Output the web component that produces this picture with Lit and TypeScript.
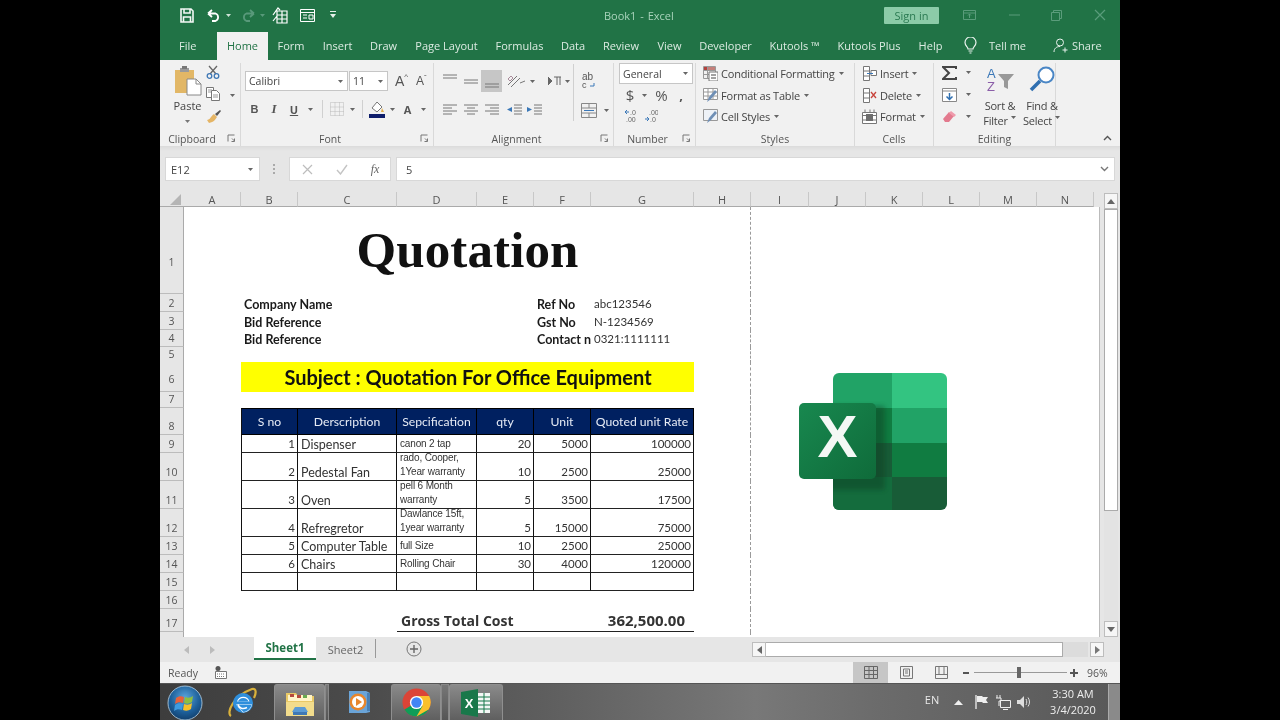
import { LitElement, html, css } from "lit";
import { customElement } from "lit/decorators.js";

const caret = (c = "#666") => html`<svg class="ic" width="7" height="5" viewBox="0 0 7 5"><path d="M1 1h5L3.5 4z" fill="${c}"/></svg>`;
const launcher = html`<svg class="launch" width="9" height="9" viewBox="0 0 9 9"><path d="M1 7.500V1h6.500M5 4.500l2.500 2.500M7.500 4.500v3h-3" fill="none" stroke="#777" stroke-width="1"/></svg>`;

const TABS: [string, number, string?][] = [
  ["File", 57], ["Home", 51, "on"], ["Form", 46], ["Insert", 47], ["Draw", 45], ["Page Layout", 81],
  ["Formulas", 65], ["Data", 42], ["Review", 54], ["View", 43], ["Developer", 69], ["Kutools ™", 69],
  ["Kutools Plus", 80], ["Help", 43],
];

const COLS = ["A", "B", "C", "D", "E", "F", "G", "H", "I", "J", "K", "L", "M", "N"];

const ITEMS: [string, string, string, string, string, string, number][] = [
  ["1", "Dispenser", "canon 2 tap", "20", "5000", "100000", 18],
  ["2", "Pedestal Fan", "rado, Cooper,\n1Year warranty", "10", "2500", "25000", 28],
  ["3", "Oven", "pell 6 Month\nwarranty", "5", "3500", "17500", 28],
  ["4", "Refregretor", "Dawlance 15ft,\n1year warranty", "5", "15000", "75000", 28],
  ["5", "Computer Table", "full Size", "10", "2500", "25000", 18],
  ["6", "Chairs", "Rolling Chair", "30", "4000", "120000", 18],
  ["", "", "", "", "", "", 18],
];

@customElement("app-root")
export class AppRoot extends LitElement {
  static styles = css`
    :host { display: block; width: 1280px; height: 720px; background: #000; overflow: hidden; font-family: "Open Sans", sans-serif; }
    * { box-sizing: border-box; }
    svg { display: block; }
    .window { width: 960px; height: 720px; margin-left: 160px; display: flex; flex-direction: column; background: #e6e6e6; position: relative; filter: blur(0.3px); }

    .title { height: 30px; background: #217346; display: grid; grid-template-columns: 444px 71px 209px 55px 24px 13px 33px 11px 31px 11px 32px 12px 14px; align-items: center; color: #a9d3bb; font-size: 11px; flex: none; }
    .qat { display: grid; grid-template-columns: 14px 13px 14px 14px 6px 14px 14px 3px 16px 12px 15px 15px 6px; align-items: center; justify-items: center; padding-left: 20px; }
    .doc { white-space: nowrap; word-spacing: 1px; }
    .signin { height: 17px; background: #8ccba8; color: #2b7a52; border-radius: 1px; display: flex; align-items: center; justify-content: center; font-size: 11px; }

    .tabs { height: 30px; background: #217346; display: flex; align-items: flex-end; color: #dcebe2; font-size: 11px; flex: none; }
    .tab { height: 28px; display: flex; align-items: center; justify-content: center; padding-bottom: 1px; white-space: nowrap; }
    .tab.tfirst { justify-content: flex-start; padding-left: 19px; }
    .tab.on { background: #f1f1f1; color: #217346; }
    .tabtools { display: flex; align-items: center; height: 28px; padding-bottom: 1px; }
    .tell { margin: 0 27px 0 12px; }
    .share { margin-left: 4px; }
    .bulb { margin-left: 12px; }

    .ribbon { height: 87px; background: #f1f1f1; display: flex; flex: none; font-size: 11px; color: #444; border-bottom: 1px solid #dcdcdc; }
    .group { display: flex; flex-direction: column; height: 83px; margin-top: 3px; border-right: 1px solid #d9d9d9; position: relative; flex: none; }
    .gbody { height: 68px; flex: none; }
    .glabel { height: 15px; text-align: center; line-height: 16px; font-size: 10.5px; color: #555; }
    .launch { position: absolute; right: 4px; bottom: 3px; }
    .ic { flex: none; }

    .g-clip { width: 81px; }
    .clip { display: grid; grid-template-columns: 39px 22px 10px; padding-left: 8px; padding-top: 2px; }
    .paste { display: flex; flex-direction: column; align-items: center; color: #444; line-height: 14px; font-size: 11px; }
    .paste span { margin-top: 3px; }
    .paste svg.ic:last-child { margin-top: 6px; }
    .clipcol { display: flex; flex-direction: column; gap: 8px; margin-left: -1px; }
    .clipcol svg { height: 14px; }
    .clipcar { padding-top: 28px; }

    .g-font { width: 193px; }
    .fonts { padding: 8px 0 0 4px; }
    .frow1 { display: grid; grid-template-columns: 103px 1px 39px 7px 14px 7px 14px; height: 20px; align-items: center; }
    .box { height: 20px; background: #fff; border: 1px solid #c6c6c6; display: flex; align-items: center; justify-content: space-between; padding: 0 3px; font-size: 10.5px; color: #444; }
    .frow2 { margin-top: 9px; height: 17px; display: grid; grid-template-columns: 19px 20px 20px 12px 12px 18px 12px 8px 21px 11px 19px 12px; align-items: center; justify-items: center; color: #555; font-size: 11px; font-weight: 700; }
    .bold-b { font-family: "Liberation Sans", sans-serif; }
    .it { font-style: italic; font-family: "Liberation Serif", serif; font-size: 13px; }
    .un { text-decoration: underline; }
    .vsep { width: 1px; height: 18px; background: #d0d0d0; }
    .bigA { font-family: "Liberation Sans", sans-serif; color: #555; font-size: 14px; display: flex; align-items: flex-start; }
    .bigA small { font-size: 8px; line-height: 8px; }
    .bigA.sm { font-size: 12px; }

    .g-align { width: 180px; }
    .align { display: flex; padding: 0 0 0 5px; }
    .aleft { width: 134px; padding-top: 7px; }
    .arow1 { display: grid; grid-template-columns: 21px 21px 21px 3px 21px 12px 9px 15px 11px; height: 22px; align-items: center; justify-items: center; }
    .arow2 { display: grid; grid-template-columns: 21px 21px 21px 24px 16px; margin-top: 11px; height: 14px; align-items: center; justify-items: center; }
    .hl { background: #c6c6c6; width: 21px; height: 22px; display: flex; align-items: center; justify-content: center; }
    .aright { border-left: 1px solid #d0d0d0; height: 57px; margin-top: 1px; padding: 8px 0 0 7px; }
    .mergerow { display: flex; gap: 6px; align-items: center; margin-top: 14px; }

    .g-num { width: 82px; }
    .num { padding: 0 0 0 5px; }
    .gen { width: 74px; height: 21px; font-size: 10.5px; }
    .nrow { display: grid; grid-template-columns: 22px 7px 6px 15px 8px 8px; align-items: center; justify-items: center; height: 22px; font-size: 15px; color: #555; }
    .comma { font-weight: 700; font-size: 13px; }
    .nrow2 { display: grid; grid-template-columns: 24px 16px; height: 20px; align-items: center; justify-items: center; }

    .g-styles { width: 159px; }
    .g-cells { width: 79px; }
    .list { padding: 0 0 0 7px; display: flex; flex-direction: column; }
    .li { height: 21.5px; display: flex; align-items: center; gap: 3px; white-space: nowrap; letter-spacing: -0.2px; }

    .g-edit { width: 122px; }
    .edit { display: grid; grid-template-columns: 23px 13px 5px 34px 8px 34px; padding: 3px 0 0 8px; }
    .ecol { display: flex; flex-direction: column; gap: 8px; }
    .ecar { display: flex; flex-direction: column; gap: 17px; padding-top: 4px; }
    .big { display: flex; flex-direction: column; align-items: center; line-height: 15px; white-space: nowrap; letter-spacing: -0.2px; }
    .big svg:first-child { margin: 0 0 6px; }
    .big span { display: flex; align-items: center; gap: 2px; }
    .collapse { flex: 1; display: flex; align-items: flex-end; justify-content: flex-end; padding: 0 8px 5px 0; }

    .fbar { height: 45px; padding: 10px 5px 0 5px; display: grid; grid-template-columns: 95px 29px 102px 5px 1fr; flex: none; background: linear-gradient(#dedede, #e6e6e6 4px); }
    .fbox { height: 24px; background: #fff; border: 1px solid #d8d8d8; display: flex; align-items: center; font-size: 11px; color: #444; padding: 0 5px; justify-content: space-between; }
    .fbox.formula { padding-left: 9px; }
    .dots { display: flex; flex-direction: column; gap: 2px; align-items: center; justify-content: center; height: 24px; padding-right: 2px; }
    .dots i { width: 2px; height: 2px; background: #aaa; }
    .fx { display: grid; grid-template-columns: 34px 35px 32px; align-items: center; justify-items: center; padding: 0; }
    .fxt { font-family: "Liberation Serif", serif; font-style: italic; color: #666; font-size: 12px; }

    .sheetwrap { display: flex; flex: none; height: 445px; }
    .sheetcol { width: 940px; flex: none; display: flex; flex-direction: column; position: relative; }
    .grid { display: grid; grid-template-columns: 24px 57px 57px 99px 80px 57px 57px 103px 57px 58px 57px 57px 57px 57px 57px; }
    .hdr { height: 15px; background: #e6e6e6; font-size: 11px; color: #555; }
    .hdr div { height: 15px; display: flex; align-items: center; justify-content: center; border-right: 1px solid #c8c8c8; border-bottom: 1px solid #aaa; }
    .hdr .corner { border-right: 0; justify-content: flex-end; padding-right: 3px; }
    .sheet { height: 430px; background: #fff; overflow: hidden; border-right: 1px solid #bbb; width: 940px; font-family: Lato, sans-serif; font-size: 12.5px; color: #333; }
    .row { width: 940px; }
    .rh { grid-column: 1; background: #e6e6e6; border-right: 1px solid #aaa; border-bottom: 1px solid #bcbcbc; font-family: "Open Sans", sans-serif; font-size: 10.5px; color: #555; display: flex; align-items: flex-end; justify-content: center; padding-bottom: 1px; }
    .rh1 { padding-bottom: 24px; }
    .rh6 { padding-bottom: 5px; }
    .c { display: flex; align-items: flex-end; white-space: nowrap; overflow: hidden; padding: 0 2px 0 3px; min-width: 0; }
    .cB { grid-column: 3; } .cC { grid-column: 4; } .cD { grid-column: 5; } .cE { grid-column: 6; } .cF { grid-column: 7; } .cG { grid-column: 8; }
    .cBC { grid-column: 3 / 5; }
    .pb { grid-column: 9; border-right: 1px dashed #9a9a9a; }
    .merged { grid-column: 3 / 9; justify-content: center; }
    .bold { font-weight: 700; color: #1a1a1a; }
    .n { font-size: 11.5px; line-height: 16px; }
    .quot { font-family: "Liberation Serif", serif; font-weight: 700; font-size: 51px; color: #111; align-items: center; padding: 0 0 2px 0; overflow: visible; letter-spacing: 0.1px; }
    .subj { background: #ff0; font-size: 20px; font-weight: 700; color: #111; align-items: center; }
    .th { background: #002060; color: #e6ebf5; align-items: center; justify-content: center; border-right: 1px solid #000; border-top: 1px solid #000; border-bottom: 1px solid #000; padding: 0; font-size: 12.2px; }
    .td { border-right: 1px solid #111; border-bottom: 1px solid #222; }
    .lead { border-left: 1px solid #111; }
    .r { justify-content: flex-end; }
    .spec { font-family: "Liberation Sans", sans-serif; font-size: 10px; line-height: 14px; white-space: pre; padding-bottom: 1px; letter-spacing: -0.15px; }
    .gross { grid-column: 5 / 8; font-family: "Open Sans", sans-serif; font-weight: 700; font-size: 14px; border-bottom: 1px solid #222; padding-left: 4px; align-items: center; }
    .grossv { grid-column: 8; font-family: "Open Sans", sans-serif; font-weight: 700; font-size: 15px; border-bottom: 1px solid #222; justify-content: flex-end; padding-right: 9px; align-items: center; }
    .logo { position: absolute; left: 639px; top: 180px; }

    .vbar { width: 20px; padding: 1px 2px 0 4px; display: flex; flex-direction: column; }
    .sbtn { height: 16px; background: #f6f6f6; border: 1px solid #bdbdbd; display: flex; align-items: center; justify-content: center; flex: none; }
    .thumb { height: 302px; background: #fff; border: 1px solid #ababab; flex: none; }
    .track { flex: 1; background: #e3e3e3; }

    .tabbar { height: 25px; flex: none; display: grid; grid-template-columns: 94px 62px 59px 1px 1fr; align-items: start; background: #e6e6e6; font-size: 11px; color: #666; position: relative; }
    .navs { display: flex; gap: 21px; padding: 9px 0 0 24px; }
    .sh1 { height: 23px; background: #fff; border-bottom: 2px solid #217346; color: #217346; font-weight: 700; display: flex; align-items: center; justify-content: center; font-size: 11.5px; }
    .sh2 { height: 21px; display: flex; align-items: center; justify-content: center; padding-top: 3px; }
    .sep2 { height: 19px; margin-top: 2px; background: #999; }
    .plus { display: flex; justify-content: space-between; padding: 4px 0 0 30px; height: 25px; }
    .hscroll { display: flex; padding: 2px 18px 0 0; width: 368px; flex: none; margin-top: -1px; }
    .hbtn { width: 14px; height: 15px; background: #f6f6f6; border: 1px solid #bdbdbd; display: flex; align-items: center; justify-content: center; flex: none; }
    .hthumb { width: 297px; height: 15px; background: #fff; border: 1px solid #ababab; border-left: 0; flex: none; }
    .htrack { width: 25px; height: 15px; background: #dcdcdc; margin-right: 2px; flex: none; }

    .status { height: 21px; flex: none; background: #f1f1f1; display: flex; align-items: center; font-size: 10.5px; color: #555; padding-left: 8px; }
    .status .macro { margin-left: 17px; }
    .views { margin-left: auto; display: grid; grid-template-columns: 35px 36px 34px 16px 93px 14px; align-items: center; justify-items: center; height: 21px; }
    .vhl { background: #c6c6c6; width: 35px; height: 21px; display: flex; align-items: center; justify-content: center; }
    .slider { width: 93px; height: 1px; background: #999; position: relative; display: block; }
    .knob { position: absolute; left: 43px; top: -5px; width: 4px; height: 11px; background: #666; }
    .pct { font-size: 10.5px; width: 39px; padding-left: 6px; }

    .taskbar { height: 37px; flex: none; display: grid; grid-template-columns: 50px 64px 51px 4px 60px 2px 50px 8px 54px 1fr 28px 24px 22px 22px 20px 74px 12px; align-items: center; justify-items: center; background: linear-gradient(90deg, #3d3d3d 0%, #4a4a4a 20%, #5e5e5e 40%, #787878 62%, #6b6b6b 75%, #585858 100%); border-top: 1px solid #555; color: #e8e8e8; font-size: 11px; }
    .tb { width: 100%; height: 36px; display: flex; align-items: center; justify-content: center; background: linear-gradient(#8a8a8a, #5f5f5f); border: 1px solid #8f8f8f; border-bottom: 0; border-radius: 3px 3px 0 0; }
    .sliver { width: 100%; height: 36px; background: linear-gradient(#777, #555); border: 1px solid #888; border-bottom: 0; }
    .clock { text-align: center; line-height: 16px; font-size: 11px; white-space: nowrap; color: #eee; padding-left: 4px; }
    .desk { width: 100%; height: 36px; background: #8a8a8a; border-left: 1px solid #aaa; }
    .en { font-size: 11px; margin-bottom: 6px; }
  `;

  private logo() {
    return html`<svg class="logo" width="150" height="140" viewBox="0 0 150 140">
      <defs><linearGradient id="xg" x1="0" y1="0" x2="1" y2="1"><stop offset="0" stop-color="#18884f"/><stop offset="1" stop-color="#0f6b3a"/></linearGradient>
      <filter id="xb" x="-20%" y="-20%" width="140%" height="140%"><feGaussianBlur stdDeviation="2.5"/></filter>
      <clipPath id="xc"><rect x="34" y="1" width="114" height="137" rx="6"/></clipPath></defs>
      <g clip-path="url(#xc)">
        <rect x="34" y="1" width="59" height="35" fill="#21a366"/><rect x="93" y="1" width="55" height="35" fill="#33c481"/>
        <rect x="34" y="36" width="59" height="35" fill="#107c41"/><rect x="93" y="36" width="55" height="35" fill="#21a366"/>
        <rect x="34" y="71" width="59" height="34" fill="#185c37"/><rect x="93" y="71" width="55" height="34" fill="#107c41"/>
        <rect x="34" y="105" width="114" height="33" fill="#185c37"/>
        <rect x="34" y="105" width="59" height="33" fill="#14703f" opacity=".8"/>
        <rect x="20" y="34" width="66" height="84" rx="3" fill="#0b3d22" opacity=".45" filter="url(#xb)"/>
      </g>
      <rect x="0" y="31" width="77" height="76" rx="5" fill="url(#xg)"/>
      <text x="38.500" y="85" text-anchor="middle" font-family="Liberation Sans, sans-serif" font-weight="700" font-size="60" fill="#f4f8f5">X</text>
    </svg>`;
  }

  private titleBar() {
    return html`<div class="title">
      <div class="qat">
        <svg class="ic" width="14" height="15" viewBox="0 0 14 15"><path d="M1 1h10l2 2v11H1zM4 1v4h6V1M3.500 14V9h7v5" fill="none" stroke="#fff" stroke-width="1.600" opacity=".95"/></svg>
        <span></span>
        <svg class="ic" width="14" height="13" viewBox="0 0 14 13"><path d="M1 4.500h7.500a4 4 0 010 7.500H5M1 4.500L5 1M1 4.500L5 8" fill="none" stroke="#fff" stroke-width="1.800"/></svg>
        ${caret("#cfe3d7")}
        <span></span>
        <svg class="ic" width="14" height="13" viewBox="0 0 14 13"><path d="M13 4.500H5.500a4 4 0 000 7.500H9M13 4.500L9 1M13 4.500L9 8" fill="none" stroke="#58997a" stroke-width="1.800"/></svg>
        ${caret("#58997a")}
        <span></span>
        <svg class="ic" width="16" height="17" viewBox="0 0 16 17"><path d="M5 4h10v12H5zM5 8h10M5 12h10M10 4v12M1 8l5-7 2 2M1 14l4-5" fill="none" stroke="#fff" stroke-width="1.200"/></svg>
        <span></span>
        <svg class="ic" width="15" height="13" viewBox="0 0 15 13"><path d="M.5.500h14v12H.500zM.5 3.500h14M3 6h4M3 9h4M9 6h4v4H9z" fill="none" stroke="#fff" stroke-width="1"/></svg>
        <span></span>
        <svg class="ic" width="6" height="8" viewBox="0 0 6 8"><path d="M0 0h6v1H0zM0 3h6L3 7z" fill="#e6f0ea"/></svg>
      </div>
      <div class="doc">Book1 - Excel</div><span></span>
      <div class="signin">Sign in</div><span></span>
      <svg width="13" height="10" viewBox="0 0 13 10"><path d="M.5.500h12v9H.500zM.5 3h12M6.500 8V4M5 5.500l1.500-1.500L8 5.500" fill="none" stroke="#5a9c7b"/></svg><span></span>
      <svg width="11" height="2" viewBox="0 0 11 2"><path d="M0 1h11" stroke="#5a9c7b"/></svg><span></span>
      <svg width="11" height="11" viewBox="0 0 11 11"><path d="M.5 2.500h8v8h-8zM2.500 2.500v-2h8v8h-2" fill="none" stroke="#5a9c7b"/></svg><span></span>
      <svg width="12" height="12" viewBox="0 0 12 12"><path d="M1 1l10 10M11 1L1 11" stroke="#5a9c7b" stroke-width="1.200"/></svg>
    </div>`;
  }

  private tabs() {
    return html`<div class="tabs">
      ${TABS.map(([t, w, on], i) => html`<div class="tab ${on ?? ""} ${i === 0 ? "tfirst" : ""}" style="width:${w}px">${t}</div>`)}
      <div class="tabtools">
        <svg class="bulb ic" width="13" height="17" viewBox="0 0 13 17"><path d="M4 12c0-2-3-3-3-6.500a5.500 5.500 0 0111 0C12 9 9 10 9 12zM4.500 14h4M5.500 16h2" fill="none" stroke="#eaf3ee" stroke-width="1.200"/></svg>
        <span class="tell">Tell me</span>
        <svg class="ic" width="15" height="15" viewBox="0 0 15 15"><circle cx="7" cy="4.500" r="3.500" fill="none" stroke="#eaf3ee"/><path d="M1 14c0-3.500 2.500-5.500 6-5.500M9.500 12h5M12 9.500v5" fill="none" stroke="#eaf3ee"/></svg>
        <span class="share">Share</span>
      </div>
    </div>`;
  }

  private ribbon() {
    const lines = (d: string, w = 16, h = 12) => html`<svg class="ic" width="${w}" height="${h}" viewBox="0 0 ${w} ${h}"><path d="${d}" stroke="#777" stroke-width="1" fill="none"/></svg>`;
    return html`<div class="ribbon">
      <div class="group g-clip">
        <div class="gbody clip">
          <div class="paste">
            <svg class="ic" width="28" height="31" viewBox="0 0 28 31"><path d="M1 5h19v23H1z" fill="#e2b766"/><path d="M6 3h9v4H6z" fill="#9a9a9a"/><path d="M8 1h5v3H8z" fill="#777"/><path d="M13 14h9l5 5v11H13z" fill="#fff" stroke="#888"/><path d="M22 14v5h5" fill="none" stroke="#888"/></svg>
            <span>Paste</span>
            ${caret("#777")}
          </div>
          <div class="clipcol">
            <svg width="14" height="14" viewBox="0 0 14 14"><path d="M3 1l7 8M11 1L4 9" stroke="#666" stroke-width="1.300"/><circle cx="3.500" cy="11" r="2.300" fill="none" stroke="#3f78b5" stroke-width="1.300"/><circle cx="10.500" cy="11" r="2.300" fill="none" stroke="#3f78b5" stroke-width="1.300"/></svg>
            <svg width="15" height="14" viewBox="0 0 15 14"><path d="M.5.500h7v10h-7z" fill="#fff" stroke="#777"/><path d="M5.500 3.500h5l3 3v7h-8z" fill="#fff" stroke="#777"/><path d="M2 3h4M2 5h3M7 8h5M7 10h5" stroke="#999"/></svg>
            <svg width="15" height="14" viewBox="0 0 15 14"><path d="M9 5l5-4 1 1-4 5z" fill="#555"/><path d="M1 11c3 0 4-4 7-6l3 3c-2 3-3 5-8 6z" fill="#e5b565"/></svg>
          </div>
          <div class="clipcar">${caret("#666")}</div>
        </div>
        <div class="glabel" style="padding-right:16px">Clipboard</div>${launcher}
      </div>

      <div class="group g-font">
        <div class="gbody fonts">
          <div class="frow1">
            <div class="box"><span>Calibri</span>${caret()}</div><span></span>
            <div class="box"><span>11</span>${caret()}</div><span></span>
            <div class="bigA">A<small>^</small></div><span></span>
            <div class="bigA sm">A<small>ˇ</small></div>
          </div>
          <div class="frow2">
            <span class="bold-b">B</span><span class="it">I</span><span class="un">U</span>${caret()}
            <span class="vsep"></span>
            <svg class="ic" width="14" height="14" viewBox="0 0 14 14"><path d="M.5.500h13v13H.500zM.5 5h13M.5 9.500h13M5 .5v13M9.500.5v13" stroke="#bbb" stroke-dasharray="1 1" fill="none"/></svg>
            ${caret()}<span class="vsep"></span>
            <svg class="ic" width="16" height="17" viewBox="0 0 16 17"><path d="M3 7l5-6 5 5-5 5z" fill="#fff" stroke="#777"/><path d="M13 7l2 4h-3z" fill="#e3b04b"/><path d="M0 13h16v4H0z" fill="#0e1d6b"/></svg>
            ${caret()}<span>A</span>${caret()}
          </div>
        </div>
        <div class="glabel" style="padding-right:14px">Font</div>${launcher}
      </div>

      <div class="group g-align">
        <div class="gbody align">
          <div class="aleft">
            <div class="arow1">
              ${lines("M1 1h14M1 4h14", 16, 14)}
              ${lines("M1 6h14M1 9h14", 16, 14)}
              <div class="hl">${lines("M3 11h14M3 14h14", 20, 16)}</div>
              <span></span>
              <svg class="ic" width="20" height="14" viewBox="0 0 20 14"><path d="M2 11L11 2M5 13l9-9M14 9l5-2" stroke="#777" fill="none"/><path d="M2 5l3-3 2 2-3 3z" fill="none" stroke="#aa8b9b"/></svg>
              ${caret()}<span></span>
              <svg class="ic" width="14" height="10" viewBox="0 0 14 10"><path d="M0 1l4 4-4 4zM6 1h7M9 1v8M12 1v8" fill="#666" stroke="#666"/></svg>
              ${caret()}
            </div>
            <div class="arow2">
              ${lines("M1 1h14M1 4h9M1 7h14M1 10h9")}
              ${lines("M1 1h14M4 4h8M1 7h14M4 10h8")}
              ${lines("M1 1h14M6 4h9M1 7h14M6 10h9")}
              <svg class="ic" width="16" height="12" viewBox="0 0 16 12"><path d="M8 1h8M8 4h8M8 7h8M8 10h8" stroke="#777"/><path d="M6 3L1 5.500 6 8z" fill="#3b78b8"/></svg>
              <svg class="ic" width="16" height="12" viewBox="0 0 16 12"><path d="M8 1h8M8 4h8M8 7h8M8 10h8" stroke="#777"/><path d="M1 3l5 2.500L1 8z" fill="#3b78b8"/></svg>
            </div>
          </div>
          <div class="aright">
            <svg class="ic" width="15" height="17" viewBox="0 0 15 17"><text x="1" y="8" font-size="10" font-family="Liberation Sans, sans-serif" fill="#555">ab</text><text x="1" y="16" font-size="9" font-family="Liberation Sans, sans-serif" fill="#555">c</text><path d="M13 11v3H9" fill="none" stroke="#3b78b8"/></svg>
            <div class="mergerow">
              <svg class="ic" width="16" height="15" viewBox="0 0 16 15"><path d="M.5.500h15v14H.500zM.5 5h15M.5 10h15M8 .5V5M8 10v4.500" fill="none" stroke="#888"/><path d="M3 7.500h10" stroke="#3b78b8"/></svg>
              ${caret()}
            </div>
          </div>
        </div>
        <div class="glabel" style="padding-right:14px">Alignment</div>${launcher}
      </div>

      <div class="group g-num">
        <div class="gbody num">
          <div class="box gen"><span>General</span>${caret()}</div>
          <div class="nrow"><span>$</span>${caret()}<span></span><span>%</span><span></span><span class="comma">,</span></div>
          <div class="nrow2">
            <svg class="ic" width="14" height="14" viewBox="0 0 14 14"><text x="6" y="6" font-size="7" font-family="Liberation Sans, sans-serif" fill="#666">.0</text><text x="2" y="13" font-size="7" font-family="Liberation Sans, sans-serif" fill="#666">.00</text><path d="M5 3H1M3 1L1 3l2 2" stroke="#3b78b8" fill="none"/></svg>
            <svg class="ic" width="14" height="14" viewBox="0 0 14 14"><text x="5" y="6" font-size="7" font-family="Liberation Sans, sans-serif" fill="#666">.00</text><text x="6" y="13" font-size="7" font-family="Liberation Sans, sans-serif" fill="#666">.0</text><path d="M1 10h4M3 8l2 2-2 2" stroke="#3b78b8" fill="none"/></svg>
          </div>
        </div>
        <div class="glabel" style="padding-right:14px">Number</div>${launcher}
      </div>

      <div class="group g-styles">
        <div class="gbody list">
          <div class="li"><svg class="ic" width="15" height="15" viewBox="0 0 15 15"><path d="M.5.500h12v12H.500zM.5 4.500h12M.5 8.500h12M4.500.5v12" fill="none" stroke="#999"/><path d="M1 1h3v3H1z" fill="#b4413c"/><path d="M5 1h7v3H5z" fill="#c47f7a"/><path d="M6 6h9v9H6z" fill="#fff" stroke="#777"/><path d="M8 9h5M8 12h5" stroke="#444"/></svg><span>Conditional Formatting</span>${caret()}</div>
          <div class="li"><svg class="ic" width="15" height="15" viewBox="0 0 15 15"><path d="M.5.500h14v11H.500zM.5 4h14M.5 8h14M5 .5v11M10 .5v11" fill="#fff" stroke="#999"/><path d="M4 14l2-5 6-7 2 2-6 7z" fill="#6f8fb5"/></svg><span>Format as Table</span>${caret()}</div>
          <div class="li"><svg class="ic" width="15" height="15" viewBox="0 0 15 15"><path d="M.5.500h14v11H.500z" fill="#eef2f7" stroke="#999"/><path d="M4 14l2-5 6-7 2 2-6 7z" fill="#6f8fb5"/></svg><span>Cell Styles</span>${caret()}</div>
        </div>
        <div class="glabel">Styles</div>
      </div>

      <div class="group g-cells">
        <div class="gbody list">
          <div class="li"><svg class="ic" width="15" height="15" viewBox="0 0 15 15"><path d="M1.500.500h6v14h-6zM1.500 5h6M1.500 10h6M9 4.500h5.500v5H9z" fill="#fff" stroke="#777"/><path d="M5 7.500h6" stroke="#3b78b8"/></svg><span>Insert</span>${caret()}</div>
          <div class="li"><svg class="ic" width="15" height="15" viewBox="0 0 15 15"><path d="M1.500.500h6v14h-6zM1.500 5h6M1.500 10h6" fill="#fff" stroke="#777"/><path d="M9 4l5 6M14 4l-5 6" stroke="#c8433b" stroke-width="1.300"/></svg><span>Delete</span>${caret()}</div>
          <div class="li"><svg class="ic" width="15" height="15" viewBox="0 0 15 15"><path d="M.5 3.500h14v11H.500zM.5 6.500h14M.5 11h14" fill="#fff" stroke="#777"/><path d="M4 5h7v7H4z" fill="#6d6d6d"/><path d="M3 .5v3M8 .5v3M12 .5v3" stroke="#777"/></svg><span>Format</span>${caret()}</div>
        </div>
        <div class="glabel">Cells</div>
      </div>

      <div class="group g-edit">
        <div class="gbody edit">
          <div class="ecol">
            <svg width="15" height="14" viewBox="0 0 15 14"><path d="M14 3V1H1l6 6-6 6h13v-2" fill="none" stroke="#444" stroke-width="2"/></svg>
            <svg width="15" height="14" viewBox="0 0 15 14"><path d="M.5.500h14v13H.500z" fill="#fff" stroke="#888"/><path d="M.5 3h14" stroke="#888"/><path d="M7.500 5v6M4.500 8.500l3 3 3-3" fill="none" stroke="#2f6fb0" stroke-width="1.500"/></svg>
            <svg width="15" height="13" viewBox="0 0 15 13"><path d="M1 9l6-7 5 4-5 6H3z" fill="#e37a8e"/><path d="M9 1l5 4-2 2-5-4z" fill="#ef9bac"/></svg>
          </div>
          <div class="ecar">${caret()}${caret()}${caret()}</div>
          <span></span>
          <div class="big">
            <svg width="29" height="26" viewBox="0 0 29 26"><text x="1" y="12" font-size="13" font-family="Liberation Sans, sans-serif" fill="#3b78b8">A</text><text x="1" y="25" font-size="13" font-family="Liberation Sans, sans-serif" fill="#8b5ea8">Z</text><path d="M12 8h16l-6 7v8l-4-2v-6z" fill="#999"/></svg>
            <span>Sort &amp;</span>
            <span>Filter ${caret()}</span>
          </div>
          <span></span>
          <div class="big">
            <svg width="28" height="26" viewBox="0 0 28 26"><circle cx="18" cy="9" r="7.500" fill="#fff" stroke="#4a86c5" stroke-width="2"/><path d="M12 15L3 24" stroke="#2f6fb0" stroke-width="3.500"/></svg>
            <span>Find &amp;</span>
            <span>Select ${caret()}</span>
          </div>
        </div>
        <div class="glabel">Editing</div>
      </div>
      <div class="collapse"><svg width="9" height="6" viewBox="0 0 9 6"><path d="M1 5l3.500-3.500L8 5" fill="none" stroke="#555" stroke-width="1.400"/></svg></div>
    </div>`;
  }

  private formula() {
    return html`<div class="fbar">
      <div class="fbox"><span>E12</span>${caret("#666")}</div>
      <div class="dots"><i></i><i></i><i></i></div>
      <div class="fbox fx">
        <svg width="11" height="11" viewBox="0 0 11 11"><path d="M1 1l9 9M10 1l-9 9" stroke="#bdbdbd" stroke-width="1.200"/></svg>
        <svg width="12" height="11" viewBox="0 0 12 11"><path d="M1 6l3.500 4L11 1" fill="none" stroke="#c4c4c4" stroke-width="1.400"/></svg>
        <span class="fxt">fx</span>
      </div>
      <span></span>
      <div class="fbox formula"><span>5</span><svg width="9" height="6" viewBox="0 0 9 6"><path d="M1 1l3.500 3.500L8 1" fill="none" stroke="#777" stroke-width="1.400"/></svg></div>
    </div>`;
  }

  private sheet() {
    const row = (n: string, h: number, cells: unknown = "") => html`<div class="grid row" style="height:${h}px"><div class="rh rh${n}">${n}</div>${cells}<div class="pb"></div></div>`;
    const info = (n: string, h: number, a: string, b: string, c: string) => row(n, h, html`
      <div class="c cBC bold">${a}</div><div class="c cF bold">${b}</div><div class="c cG n">${c}</div>`);
    return html`<div class="sheetcol">
      <div class="grid hdr">
        <div class="corner"><svg width="11" height="11" viewBox="0 0 11 11"><path d="M11 0v11H0z" fill="#b5b5b5"/></svg></div>
        ${COLS.map((c) => html`<div>${c}</div>`)}
      </div>
      <div class="sheet">
        ${row("1", 87, html`<div class="c merged quot">Quotation</div>`)}
        ${info("2", 18, "Company Name", "Ref No", "abc123546")}
        ${info("3", 18, "Bid Reference", "Gst No", "N-1234569")}
        ${info("4", 17, "Bid Reference", "Contact no", "0321:1111111")}
        ${row("5", 15)}
        ${row("6", 30, html`<div class="c merged subj">Subject : Quotation For Office Equipment</div>`)}
        ${row("7", 16)}
        ${row("8", 27, html`
          <div class="c th lead cB">S no</div><div class="c th cC">Derscription</div><div class="c th cD">Sepcification</div>
          <div class="c th cE">qty</div><div class="c th cF">Unit</div><div class="c th cG">Quoted unit Rate</div>`)}
        ${ITEMS.map((it, i) => row(String(i + 9), it[6], html`
          <div class="c td lead cB r n">${it[0]}</div><div class="c td cC">${it[1]}</div>
          <div class="c td cD spec">${it[2]}</div><div class="c td cE r n">${it[3]}</div>
          <div class="c td cF r n">${it[4]}</div><div class="c td cG r n">${it[5]}</div>`))}
        ${row("16", 18)}
        ${row("17", 23, html`<div class="c gross">Gross Total Cost</div><div class="c grossv">362,500.00</div>`)}
        ${row("18", 20)}
      </div>
      ${this.logo()}
    </div>`;
  }

  private bottom() {
    const tri = (d: string, c = "#bcbcbc") => html`<svg width="5" height="8" viewBox="0 0 5 8"><path d="${d}" fill="${c}"/></svg>`;
    return html`<div class="tabbar">
      <div class="navs">${tri("M5 0v8L0 4z")}${tri("M0 0v8l5-4z")}</div>
      <div class="sh1">Sheet1</div>
      <div class="sh2">Sheet2</div>
      <div class="sep2"></div>
      <div class="plus">
        <svg width="16" height="16" viewBox="0 0 16 16"><circle cx="8" cy="8" r="7" fill="none" stroke="#777"/><path d="M8 4v8M4 8h8" stroke="#666" stroke-width="1.400"/></svg>
        <div class="hscroll">
          <div class="hbtn">${tri("M5 0v8L0 4z", "#666")}</div><div class="hthumb"></div><div class="htrack"></div>
          <div class="hbtn">${tri("M0 0v8l5-4z", "#777")}</div>
        </div>
      </div>
    </div>
    <div class="status">
      <span>Ready</span>
      <svg class="macro" width="12" height="13" viewBox="0 0 12 13"><circle cx="3" cy="2.500" r="2.500" fill="#555"/><path d="M.5 5.500h11v7H.500z" fill="#fff" stroke="#777"/><path d="M2 8h8M2 10.500h8" stroke="#777" stroke-dasharray="1 1"/></svg>
      <div class="views">
        <div class="vhl"><svg width="14" height="13" viewBox="0 0 14 13"><path d="M.5.500h13v12H.500zM.5 4.500h13M.5 8.500h13M5 .5v12M9.500.5v12" fill="none" stroke="#666"/></svg></div>
        <svg width="13" height="13" viewBox="0 0 13 13"><path d="M.5.500h12v12H.500z" fill="none" stroke="#777"/><path d="M3.500 3h6v7h-6zM5 5h3M5 7h3" fill="none" stroke="#777"/></svg>
        <svg width="13" height="13" viewBox="0 0 13 13"><path d="M.5.500h12v12H.500zM.5 8.500h12M4 .5v8M9 .5v8" fill="none" stroke="#777"/></svg>
        <svg width="6" height="2" viewBox="0 0 6 2"><path d="M0 1h6" stroke="#555" stroke-width="2"/></svg>
        <span class="slider"><i class="knob"></i></span>
        <svg width="8" height="8" viewBox="0 0 8 8"><path d="M4 0v8M0 4h8" stroke="#555" stroke-width="2"/></svg>
      </div>
      <span class="pct">96%</span>
    </div>`;
  }

  private taskbar() {
    return html`<div class="taskbar">
      <svg width="36" height="35" viewBox="0 0 36 35">
        <defs><radialGradient id="orb" cx=".5" cy=".35" r=".7"><stop offset="0" stop-color="#5aa5dd"/><stop offset=".6" stop-color="#1d5f99"/><stop offset="1" stop-color="#0f3a66"/></radialGradient></defs>
        <circle cx="18" cy="18" r="17" fill="url(#orb)" stroke="#b9d4e8" stroke-width=".8"/>
        <path d="M9 13c3-2 5-2 8-1l-1 6c-3-1-5-1-8 1z" fill="#e8613a"/><path d="M18 12c3 1 5 1 8-1l-1 6c-3 2-5 2-8 1z" fill="#8fbf3f"/>
        <path d="M8 20c3-2 5-2 8-1l-1 6c-3-1-5-1-8 1z" fill="#3d9be0"/><path d="M17 19c3 1 5 1 8-1l-1 6c-3 2-5 2-8 1z" fill="#f6c028"/>
      </svg>
      <svg width="32" height="32" viewBox="0 0 32 32"><path d="M5 30C0 27 7 10 26 3c5-1 4 5 2 9" fill="none" stroke="#d9b13b" stroke-width="2.200"/><circle cx="17" cy="17" r="10" fill="#2f8fdc"/><path d="M11 15.500h12.500a6.500 6.500 0 00-12.500 0zM10 18.500h16c-1 5-5 8-9 8" fill="#fff"/><path d="M12 15.500h10.500a5.500 5 0 00-10.500 0z" fill="#2f8fdc"/><path d="M10.500 19h15c-1 4-5 7-8 7" fill="#2f8fdc"/><path d="M12 18.500c1 4 5 5 9 3" fill="none" stroke="#fff" stroke-width="1.600"/></svg>
      <div class="tb"><svg width="30" height="28" viewBox="0 0 30 28"><path d="M1 4h10l2 3h16v20H1z" fill="#e8c866"/><path d="M3 6h24v6H3z" fill="#fff4c8"/><path d="M5 5h4v3H5zM12 6h4v3h-4z" fill="#b6483c"/><path d="M18 6h4v3h-4z" fill="#6aa84f"/><path d="M1 13h28v14H1z" fill="#f2dc8c"/><path d="M10 18h10l3 5H7z" fill="#5b9bd5"/><path d="M8 23h14v3H8z" fill="#3f78b5"/></svg></div>
      <div class="sliver"></div>
      <svg width="24" height="24" viewBox="0 0 24 24"><path d="M2 1h17l4 2v19l-4 1H2z" fill="#6aa4d8"/><path d="M20 3h3v18h-3z" fill="#4a80b5"/><circle cx="11" cy="12" r="8.500" fill="#e7862d"/><circle cx="11" cy="12" r="6" fill="#fff"/><path d="M9 8l6 4-6 4z" fill="#e7862d"/></svg>
      <span></span>
      <div class="tb"><svg width="29" height="29" viewBox="0 0 29 29"><circle cx="14.500" cy="14.500" r="14" fill="#db4437"/><path d="M14.500 14.500L2.400 21.500A14 14 0 0014.500 28.500 14 14 0 0026.600 21.500z" fill="#0f9d58"/><path d="M14.500 8h12.700a14 14 0 01-.6 13.500L14.500 28.500 20.500 18z" fill="#fbc02d"/><circle cx="14.500" cy="14.500" r="6.600" fill="#fff"/><circle cx="14.500" cy="14.500" r="5.200" fill="#4285f4"/></svg></div>
      <div class="sliver"></div>
      <div class="tb"><svg width="30" height="28" viewBox="0 0 30 28"><path d="M0 3l17-3v28L0 25z" fill="#19784a"/><path d="M17 4h12v20H17z" fill="#f4f7f5"/><path d="M17 8h12M17 12h12M17 16h12M17 20h12M23 4v20" stroke="#19784a"/><text x="8" y="19" text-anchor="middle" font-family="Liberation Sans, sans-serif" font-weight="700" font-size="13" fill="#fff">X</text></svg></div>
      <span></span>
      <span class="en">EN</span>
      <svg width="9" height="5" viewBox="0 0 9 5"><path d="M0 5l4.500-5L9 5z" fill="#eee"/></svg>
      <svg width="13" height="14" viewBox="0 0 13 14"><path d="M1 0v14" stroke="#ddd" stroke-width="1.500"/><path d="M2 1h5l1 1h5l-2 3 2 3H8L7 7H2z" fill="#eee"/></svg>
      <svg width="15" height="15" viewBox="0 0 15 15"><path d="M4.500 5.500h10v7h-10zM7 14.500h5" fill="none" stroke="#eee"/><path d="M1 0v3M4 0v3M0 3h5v3H3v5" fill="none" stroke="#eee"/></svg>
      <svg width="14" height="14" viewBox="0 0 14 14"><path d="M0 5h3l4-4v12l-4-4H0z" fill="#ddd"/><path d="M9 4c1 2 1 4 0 6M11 2.500c2 3 2 6 0 9" fill="none" stroke="#ddd"/></svg>
      <div class="clock">3:30 AM<br />3/4/2020</div>
      <div class="desk"></div>
    </div>`;
  }

  render() {
    return html`<div class="window">
      ${this.titleBar()}
      ${this.tabs()}
      ${this.ribbon()}
      ${this.formula()}
      <div class="sheetwrap">
        ${this.sheet()}
        <div class="vbar">
          <div class="sbtn"><svg width="8" height="5" viewBox="0 0 8 5"><path d="M0 5l4-5 4 5z" fill="#666"/></svg></div>
          <div class="thumb"></div><div class="track"></div>
          <div class="sbtn"><svg width="8" height="5" viewBox="0 0 8 5"><path d="M0 0l4 5 4-5z" fill="#666"/></svg></div>
        </div>
      </div>
      ${this.bottom()}
      ${this.taskbar()}
    </div>`;
  }
}
